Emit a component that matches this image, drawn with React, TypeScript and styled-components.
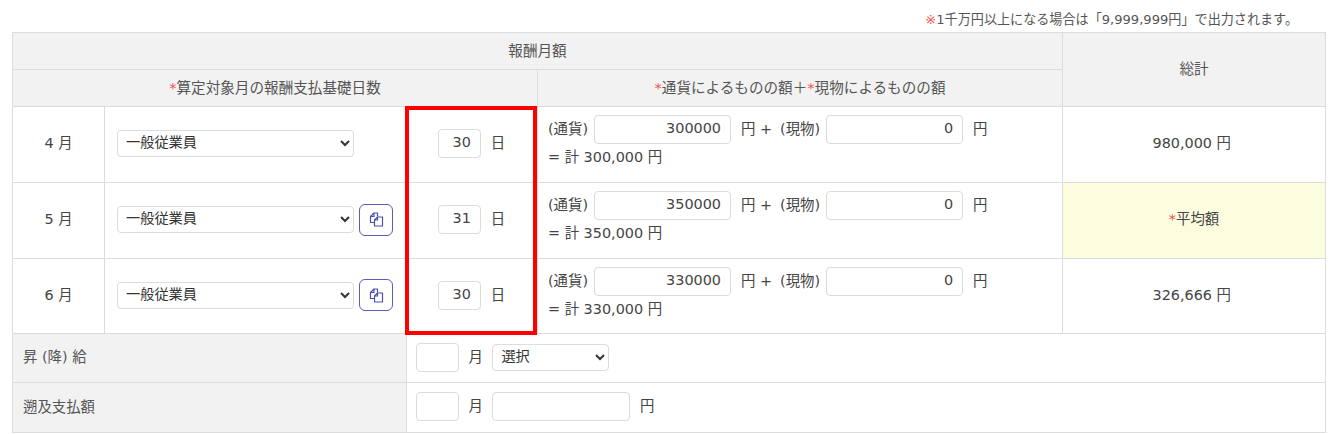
import React from "react";
import styled, { createGlobalStyle } from "styled-components";

const FONT = `"DejaVu Sans", "Noto Sans CJK JP", sans-serif`;

const Global = createGlobalStyle`
  html, body { margin: 0; padding: 0; background: #fff; }
  body { font-family: ${FONT}; font-size: 14.4px; color: #444; }
`;

const Page = styled.div`
  width: 1344px;
  height: 434px;
  overflow: hidden;
  box-sizing: border-box;
  padding: 0 19px 0 12px;
`;

const Note = styled.div`
  height: 32px;
  box-sizing: border-box;
  padding: 11px 27px 0 0;
  line-height: 18px;
  font-size: 13.1px;
  text-align: right;
  color: #555;
`;

const Req = styled.span`
  color: #f0524f;
`;

const TableWrap = styled.div`
  position: relative;
  width: 1313px;
`;

const Table = styled.table`
  width: 1313px;
  table-layout: fixed;
  border-collapse: collapse;
  td, th { border: 1px solid #dcdcdc; padding: 0; box-sizing: border-box; }
`;

const Head = styled.th<{ $h: number }>`
  background: #f2f2f2;
  font-weight: 400;
  font-size: 14.6px;
  color: #555;
  text-align: center;
  padding-bottom: 4px !important;
  height: ${(p) => p.$h}px;
`;

const Month = styled.td<{ $h: number }>`
  text-align: center;
  height: ${(p) => p.$h}px;
  padding-bottom: 6px !important;
`;

const SelectCell = styled.td`
  padding: 0 0 2px 12px !important;
`;

const SelectRow = styled.div`
  display: flex;
  align-items: center;
  gap: 5px;
`;

const Select = styled.select<{ $w: number }>`
  width: ${(p) => p.$w}px;
  height: 27px;
  box-sizing: border-box;
  border: 1px solid #dcdcdc;
  border-radius: 4px;
  background-color: #fff;
  padding: 0 0 3px 4px;
  font: 14.2px ${FONT};
  color: #333;
`;

const CopyButton = styled.button`
  width: 34px;
  height: 32px;
  box-sizing: border-box;
  border: 1px solid #5a5fb0;
  border-radius: 6px;
  background: #fff;
  padding: 0;
  display: flex;
  align-items: center;
  justify-content: center;
  color: #4a4fa8;
`;

const DaysCell = styled.td`
  text-align: center;
  padding: 0 1px 2px 0 !important;
`;

const Txt = styled.span`
  padding-bottom: 4px;
`;

const DaysInline = styled.div`
  display: flex;
  align-items: center;
  justify-content: center;
  gap: 10px;
`;

const Input = styled.input<{ $w: number }>`
  width: ${(p) => p.$w}px;
  height: 29px;
  box-sizing: border-box;
  border: 1px solid #dcdcdc;
  border-radius: 4px;
  padding: 0 9px 3px;
  text-align: right;
  font: 14.4px ${FONT};
  color: #444;
  outline: none;
`;

const AmountCell = styled.td`
  padding: 0 0 7px 10px !important;
`;

const AmountRow = styled.div`
  display: flex;
  align-items: center;
  gap: 6px;
  height: 29px;
`;

const Unit = styled(Txt)`
  margin: 0 2px 0 4px;
`;

const Total = styled.div`
  margin-top: 3px;
  line-height: 20px;
`;

const SumCell = styled.td<{ $hl?: boolean }>`
  text-align: center;
  padding-bottom: 6px !important;
  background: ${(p) => (p.$hl ? "#fcfcdf" : "#fff")};
`;

const Label = styled.td<{ $h: number }>`
  background: #f2f2f2;
  padding: 0 0 5px 10px !important;
  height: ${(p) => p.$h}px;
  color: #555;
`;

const ValueCell = styled.td`
  padding: 0 0 2px 9px !important;
`;

const FootRow = styled.div`
  display: flex;
  align-items: center;
  gap: 9.5px;
`;

const Highlight = styled.div`
  position: absolute;
  left: 393px;
  top: 74px;
  width: 132px;
  height: 229px;
  box-sizing: border-box;
  border: 4px solid #f00;
  pointer-events: none;
`;

const CopyIcon = () => (
  <svg width="15" height="15" viewBox="0 0 15 15" fill="none" stroke="currentColor" strokeWidth="1.2" strokeLinejoin="round">
    <path d="M5 10.5H1.5V4.5L5 1H8.5V4.5" />
    <path d="M5 1V4.5H1.5" />
    <path d="M5.5 8L8.5 5H13.5V14H5.5Z" fill="#fff" />
    <path d="M8.5 5V8H5.5" />
  </svg>
);

const rows = [
  { m: "4 月", h: 76, d: "30", a: "300000", t: "300,000", copy: false, sum: <>980,000 円{"\u00a0"}</>, hl: false },
  { m: "5 月", h: 76, d: "31", a: "350000", t: "350,000", copy: true, sum: <><Req>*</Req>平均額</>, hl: true },
  { m: "6 月", h: 75, d: "30", a: "330000", t: "330,000", copy: true, sum: <>326,666 円{"\u00a0"}</>, hl: false },
];

export default function App() {
  return (
    <Page>
      <Global />
      <Note><Req>※</Req>1千万円以上になる場合は「9,999,999円」で出力されます。</Note>
      <TableWrap>
        <Table>
          <colgroup>
            <col style={{ width: 92 }} />
            <col style={{ width: 302 }} />
            <col style={{ width: 131 }} />
            <col style={{ width: 525 }} />
            <col style={{ width: 263 }} />
          </colgroup>
          <thead>
            <tr>
              <Head $h={37} colSpan={4}>報酬月額</Head>
              <Head $h={37} rowSpan={2}>総計</Head>
            </tr>
            <tr>
              <Head $h={37} colSpan={3}><Req>*</Req>算定対象月の報酬支払基礎日数</Head>
              <Head $h={37}><Req>*</Req>通貨によるものの額＋<Req>*</Req>現物によるものの額</Head>
            </tr>
          </thead>
          <tbody>
            {rows.map((r) => (
              <tr key={r.m}>
                <Month $h={r.h}>{r.m}</Month>
                <SelectCell>
                  <SelectRow>
                    <Select $w={237} defaultValue="一般従業員">
                      <option>一般従業員</option>
                    </Select>
                    {r.copy && <CopyButton aria-label="コピー"><CopyIcon /></CopyButton>}
                  </SelectRow>
                </SelectCell>
                <DaysCell>
                  <DaysInline>
                    <Input $w={43} defaultValue={r.d} />
                    <Txt>日</Txt>
                  </DaysInline>
                </DaysCell>
                <AmountCell>
                  <AmountRow>
                    <Txt>(通貨)</Txt>
                    <Input $w={137} defaultValue={r.a} />
                    <Unit>円 +</Unit>
                    <Txt>(現物)</Txt>
                    <Input $w={137} defaultValue="0" />
                    <Unit>円</Unit>
                  </AmountRow>
                  <Total>= 計 {r.t} 円</Total>
                </AmountCell>
                <SumCell $hl={r.hl}>{r.sum}</SumCell>
              </tr>
            ))}
            <tr>
              <Label $h={49} colSpan={2}>昇 (降) 給</Label>
              <ValueCell colSpan={3}>
                <FootRow>
                  <Input $w={43} />
                  <Txt>月</Txt>
                  <Select $w={117} defaultValue="選択">
                    <option>選択</option>
                  </Select>
                </FootRow>
              </ValueCell>
            </tr>
            <tr>
              <Label $h={50} colSpan={2}>遡及支払額</Label>
              <ValueCell colSpan={3}>
                <FootRow>
                  <Input $w={43} />
                  <Txt>月</Txt>
                  <Input $w={138} />
                  <Txt>円</Txt>
                </FootRow>
              </ValueCell>
            </tr>
          </tbody>
        </Table>
        <Highlight />
      </TableWrap>
    </Page>
  );
}
